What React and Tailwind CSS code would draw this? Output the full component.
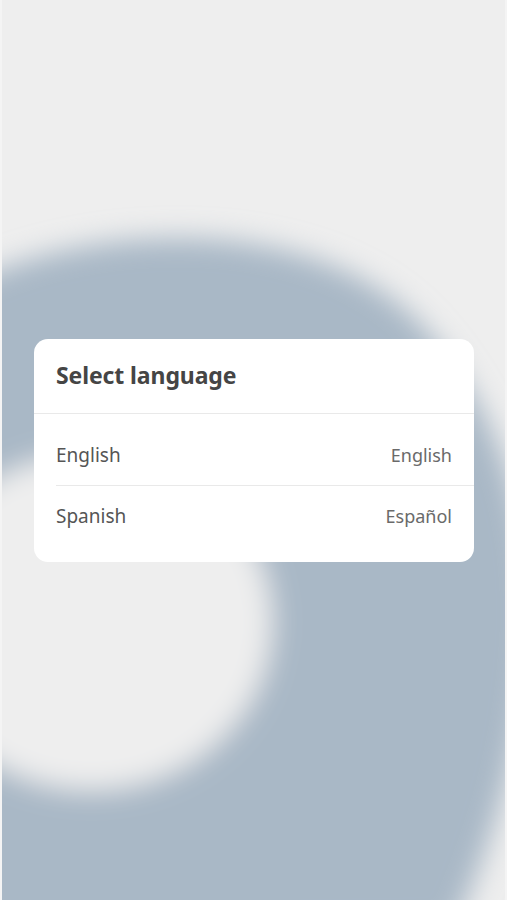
import React from 'react'

const languages = [
  { name: 'English', native: 'English' },
  { name: 'Spanish', native: 'Español' },
]

const Backdrop = () => (
  <svg
    className="absolute inset-0 w-full h-full"
    viewBox="0 0 507 900"
    preserveAspectRatio="none"
  >
    <defs>
      <filter id="soft" x="-20%" y="-20%" width="140%" height="140%">
        <feGaussianBlur stdDeviation="14" />
      </filter>
    </defs>
    <g filter="url(#soft)">
      <path
        d="M -60 300 C 40 228, 300 200, 420 322 C 500 405, 540 520, 530 650 C 522 750, 500 830, 455 930 L -60 940 Z"
        fill="#a9b8c6"
      />
      <ellipse cx="90" cy="622" rx="182" ry="168" fill="#eeeeee" />
    </g>
  </svg>
)

export default function App() {
  return (
    <div
      className="relative h-[900px] w-full overflow-hidden bg-[#eeeeee] border-x-2 border-[#f4f4f4]"
      style={{ fontFamily: '"Noto Sans", "Open Sans", sans-serif' }}
    >
      <Backdrop />

      <div className="relative flex h-full items-center pl-[32px]">
        {/* dialog card */}
        <div className="w-[440px] rounded-[14px] bg-white overflow-hidden">
          <div className="h-[75px] flex items-center px-[22px] border-b border-[#e9e9e9]">
            <h1 className="text-[23px] font-bold text-[#454545] tracking-[-0.1px]">Select language</h1>
          </div>

          <div className="pt-[12px] pb-[15px]">
            {languages.map((lang, i) => (
              <div
                key={lang.name}
                className={
                  i === 0
                    ? 'ml-[22px] h-[60px] pr-[22px] flex items-center justify-between border-b border-[#e9e9e9]'
                    : 'ml-[22px] h-[61px] pr-[22px] flex items-center justify-between'
                }
              >
                <span className="text-[19px] text-[#555555]">{lang.name}</span>
                <span className="text-[18px] text-[#6a6a6a]">{lang.native}</span>
              </div>
            ))}
          </div>
        </div>
      </div>
    </div>
  )
}
